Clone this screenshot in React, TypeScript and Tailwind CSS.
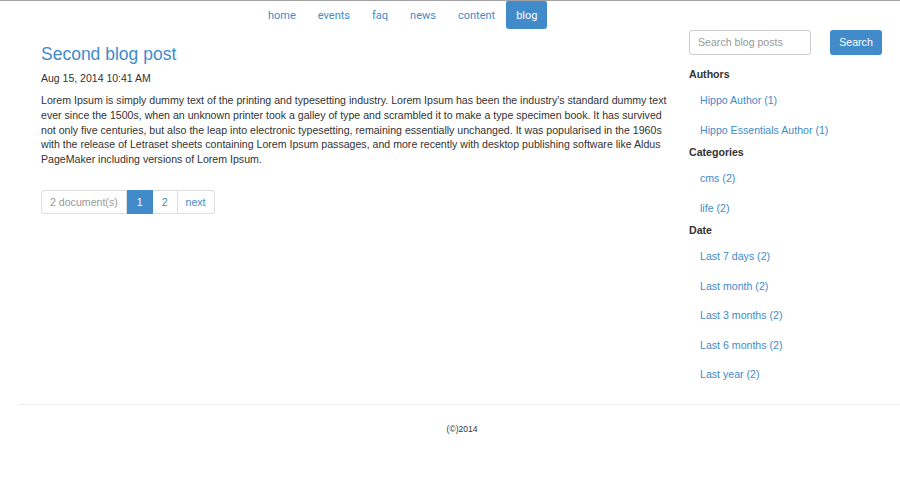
import React from 'react';

const navItems = ['home', 'events', 'faq', 'news', 'content', 'blog'];

const sidebar = [
  {title: 'Authors', links: ['Hippo Author (1)', 'Hippo Essentials Author (1)']},
  {title: 'Categories', links: ['cms (2)', 'life (2)']},
  {
    title: 'Date',
    links: ['Last 7 days (2)', 'Last month (2)', 'Last 3 months (2)', 'Last 6 months (2)', 'Last year (2)'],
  },
];

const body =
  "Lorem Ipsum is simply dummy text of the printing and typesetting industry. Lorem Ipsum has been the industry's standard dummy text ever since the 1500s, when an unknown printer took a galley of type and scrambled it to make a type specimen book. It has survived not only five centuries, but also the leap into electronic typesetting, remaining essentially unchanged. It was popularised in the 1960s with the release of Letraset sheets containing Lorem Ipsum passages, and more recently with desktop publishing software like Aldus PageMaker including versions of Lorem Ipsum.";

export default function App() {
  return (
    <div className="min-h-[500px] w-[900px] border-t border-[#a3a3a3] bg-white font-['Liberation_Sans',Arial,sans-serif] text-[#333]">
      <nav className="flex pl-[257px]">
        {navItems.map((item) => (
          <a
            key={item}
            className={
              item === 'blog'
                ? "rounded-b-[3px] rounded-t-[2px] bg-[#428bca] px-[10px] pb-[7px] pt-[8px] font-['Roboto',sans-serif] text-[11px] leading-[13px] text-white"
                : "px-[11px] pb-[7px] pt-[8px] font-['Roboto',sans-serif] text-[11px] leading-[13px] text-[#428bca]"
            }
          >
            {item}
          </a>
        ))}
      </nav>

      <div className="flex px-[41px]">
        <main className="w-[630px] shrink-0">
          <h1 className="mt-[14px] text-[17.5px] leading-[22px] text-[#428bca]">Second blog post</h1>
          <p className="mt-[5px] text-[10.5px] leading-[16px]">Aug 15, 2014 10:41 AM</p>
          <p className="mt-[7px] w-[630px] text-[10.6px] leading-[14.8px]">{body}</p>

          <div className="mt-[23px] flex w-fit text-[10.6px] leading-[22px]">
            <span className="rounded-l-[3px] border border-[#ddd] px-[8px] text-[#999]">2 document(s)</span>
            <span className="border border-[#428bca] bg-[#428bca] px-[9px] text-white">1</span>
            <span className="border border-l-0 border-[#ddd] px-[9px] text-[#428bca]">2</span>
            <span className="rounded-r-[3px] border border-l-0 border-[#ddd] px-[8px] text-[#428bca]">next</span>
          </div>
        </main>

        <aside className="ml-[18px] flex-1">
          <div className="mt-[1px] flex items-center gap-[19px]">
            <div className="h-[25px] w-[122px] rounded-[3px] border border-[#ccc] px-[8px] text-[10.6px] leading-[23px] text-[#999]">
              Search blog posts
            </div>
            <button className="h-[25px] w-[52px] rounded-[3px] bg-[#428bca] text-center text-[10.6px] leading-[25px] text-white">
              Search
            </button>
          </div>

          <div className="mt-[12px]">
            {sidebar.map((group) => (
              <div key={group.title}>
                <h4 className="text-[10.6px] font-bold leading-[14px] text-[#333]">{group.title}</h4>
                <ul className="pt-[5px]">
                  {group.links.map((link) => (
                    <li key={link} className="pl-[11px] text-[10.6px] leading-[29.5px] text-[#428bca]">
                      {link}
                    </li>
                  ))}
                </ul>
              </div>
            ))}
          </div>
        </aside>
      </div>

      <div className="ml-[19px] mt-[14px] border-t border-[#eee]" />
      <p className="pl-[24px] pt-[19px] text-center text-[8.5px] leading-[10px] text-[#333]">(©)2014</p>
    </div>
  );
}
